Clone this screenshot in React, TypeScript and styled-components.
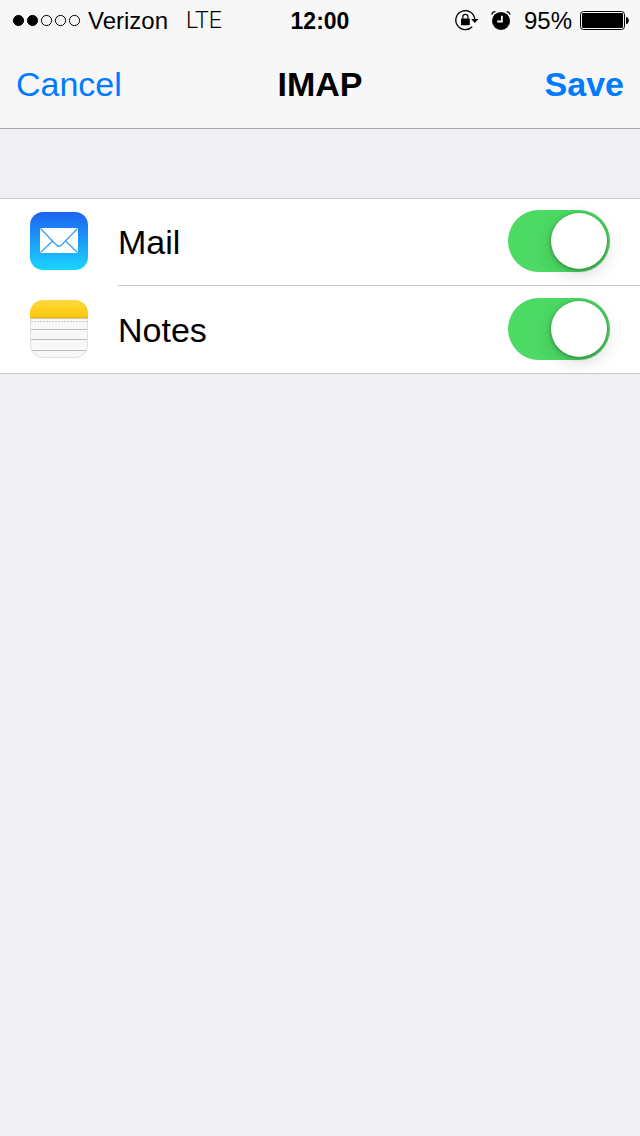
import React, { useState } from 'react';
import styled, { createGlobalStyle } from 'styled-components';

const GlobalStyle = createGlobalStyle`
  * { box-sizing: border-box; }
  body {
    margin: 0;
    background: #efeff4;
    color: #000;
    font-family: "Liberation Sans", Arial, sans-serif;
  }
`;

const Header = styled.header`
  background: #f7f7f7;
  border-bottom: 1px solid #a7a7ab;
`;

const StatusBar = styled.div`
  display: grid;
  grid-template-columns: 1fr auto 1fr;
  align-items: center;
  height: 42px;
  padding: 0 11px;
  font-size: 24px;
  line-height: 42px;
  svg { display: block; }
`;

const StatusGroup = styled.div<{ $end?: boolean }>`
  display: flex;
  align-items: center;
  justify-content: ${(p) => (p.$end ? 'flex-end' : 'flex-start')};
  gap: 8px;
`;

const Network = styled.span`
  margin-left: 10px;
  font-family: Roboto, "Liberation Sans", sans-serif;
  font-size: 23px;
  font-weight: 300;
`;

const Clock = styled.time`
  font-size: 23px;
  font-weight: 700;
`;

const AlarmSlot = styled.span`
  padding: 0 5px 0 4px;
`;

const NavBar = styled.nav`
  display: grid;
  grid-template-columns: 1fr auto 1fr;
  align-items: center;
  height: 86px;
  padding: 0 16px 2px;
`;

const Title = styled.h1`
  margin: 0;
  font-size: 34px;
  line-height: 40px;
`;

const NavButton = styled.button<{ $primary?: boolean }>`
  justify-self: ${(p) => (p.$primary ? 'end' : 'start')};
  padding: 0;
  border: 0;
  background: none;
  color: #007aff;
  font-family: inherit;
  font-size: 34px;
  font-weight: ${(p) => (p.$primary ? 700 : 400)};
  line-height: 40px;
  cursor: pointer;
`;

const List = styled.ul`
  margin: 69px 0 0;
  padding: 0;
  list-style: none;
  background: #fff;
  box-shadow: inset 0 1px #c8c7cc, inset 0 -1px #c8c7cc;
`;

const Row = styled.li`
  display: flex;
  padding-left: 30px;
`;

const IconBox = styled.span`
  flex: none;
  width: 88px;
  padding-top: 14px;
  svg { display: block; }
`;

const RowBody = styled.div`
  display: flex;
  flex: 1;
  align-items: center;
  height: 88px;
  padding: 12px 30px 13px 0;
  border-bottom: 1px solid #c8c7cc;
`;

const RowLabel = styled.label`
  flex: 1;
  padding-top: 2px;
  font-size: 34px;
  line-height: 40px;
`;

const Switch = styled.input`
  appearance: none;
  flex: none;
  width: 102px;
  height: 62px;
  margin: 0;
  padding: 3px;
  border-radius: 31px;
  background: #e5e5ea;
  cursor: pointer;
  transition: background 0.2s;

  &::before {
    content: '';
    display: block;
    width: 56px;
    height: 56px;
    border-radius: 50%;
    background: #fff;
    box-shadow: 0 1px 4px rgba(0, 0, 0, 0.36), 0 6px 18px rgba(0, 0, 0, 0.14);
    transition: margin 0.2s;
  }
  &:checked { background: #4cd964; }
  &:checked::before { margin-left: 40px; }
`;

const SignalDots = () => (
  <svg width="69" height="14" viewBox="-2 0 69 14" aria-hidden="true">
    {[0, 1, 2, 3, 4].map((i) => (
      <circle
        key={i}
        cx={5.5 + i * 14}
        cy="6.5"
        r="5.1"
        fill={i < 2 ? '#000' : 'none'}
        stroke="#000"
        strokeWidth="1"
      />
    ))}
  </svg>
);

const RotationLock = () => (
  <svg width="24" height="22" viewBox="0 0 24 22" aria-hidden="true">
    <path d="M19.8 9.5A9.5 9.5 0 1 0 17.2 16.7" fill="none" stroke="#000" strokeWidth="1.3" />
    <path d="M16.2 9h7.2l-3.6 4z" />
    <rect x="6" y="8.4" width="8.8" height="6.8" rx="0.6" />
    <path d="M7.8 8.8V6.9a2.6 2.6 0 0 1 5.2 0v1.9" fill="none" stroke="#000" strokeWidth="1.2" />
  </svg>
);

const Alarm = () => (
  <svg width="20" height="20" viewBox="0 0 20 20" aria-hidden="true">
    <circle cx="10" cy="9.9" r="9" />
    <path d="M10.9 4.8v5.7H6.2" fill="none" stroke="#f7f7f7" strokeWidth="1.8" />
    <path d="M0.9 3.8C1.1 2 2.4 0.7 4.4 0.7M19.1 3.8C18.9 2 17.6 0.7 15.6 0.7" fill="none" stroke="#000" strokeWidth="1.2" />
  </svg>
);

const Battery = () => (
  <svg width="49" height="20" viewBox="0 0 49 20" aria-hidden="true">
    <rect x="0.5" y="0.5" width="44" height="18" rx="3" fill="none" stroke="#000" />
    <rect x="2" y="2" width="41" height="15" rx="1.2" />
    <path d="M46 6c3.7 0 3.7 7 0 7z" />
  </svg>
);

const MailIcon = () => (
  <svg width="58" height="58" viewBox="0 0 58 58" aria-hidden="true">
    <defs>
      <linearGradient id="mail-sky" x1="0" y1="0" x2="0" y2="1">
        <stop offset="0" stopColor="#1d62f0" />
        <stop offset="1" stopColor="#19d5fd" />
      </linearGradient>
    </defs>
    <rect width="58" height="58" rx="13" fill="url(#mail-sky)" />
    <rect x="10" y="16" width="38" height="25" rx="0.8" fill="#fff" />
    <g fill="none" stroke="#2b9bf6" strokeWidth="1.1">
      <path d="M10.5 16.5L26.4 33Q29 35.6 31.6 33L47.5 16.5" />
      <path d="M10.5 40.5L22.5 29M47.5 40.5L35.5 29" />
    </g>
  </svg>
);

const NotesIcon = () => (
  <svg width="58" height="58" viewBox="0 0 58 58" aria-hidden="true">
    <defs>
      <linearGradient id="notes-gold" x1="0" y1="0" x2="0" y2="1">
        <stop offset="0" stopColor="#fed93f" />
        <stop offset="1" stopColor="#fdc905" />
      </linearGradient>
      <clipPath id="notes-shape">
        <rect width="58" height="58" rx="13" />
      </clipPath>
    </defs>
    <g clipPath="url(#notes-shape)">
      <rect width="58" height="58" fill="#f8f8f8" />
      <rect width="58" height="18" fill="url(#notes-gold)" />
      <path d="M0 18H58" stroke="#c0a24a" />
      <path d="M1 21.5H58" stroke="#c4c4c6" strokeDasharray="2 1" />
      <path d="M0 29.5H58M0 39.5H58M0 50.5H58" stroke="#bcbcbe" />
    </g>
    <path d="M0.5 19V45A12.5 12.5 0 0 0 13 57.5H45A12.5 12.5 0 0 0 57.5 45V19" fill="none" stroke="#e0e0e2" />
  </svg>
);

const services = [
  { id: 'mail', name: 'Mail', Icon: MailIcon },
  { id: 'notes', name: 'Notes', Icon: NotesIcon },
];

export default function App() {
  const [enabled, setEnabled] = useState<Record<string, boolean>>({ mail: true, notes: true });

  return (
    <>
      <GlobalStyle />
      <Header>
        <StatusBar>
          <StatusGroup>
            <SignalDots />
            <span>Verizon</span>
            <Network>LTE</Network>
          </StatusGroup>
          <Clock>12:00</Clock>
          <StatusGroup $end>
            <RotationLock />
            <AlarmSlot><Alarm /></AlarmSlot>
            <span>95%</span>
            <Battery />
          </StatusGroup>
        </StatusBar>
        <NavBar>
          <NavButton type="button">Cancel</NavButton>
          <Title>IMAP</Title>
          <NavButton type="button" $primary>Save</NavButton>
        </NavBar>
      </Header>
      <main>
        <List>
          {services.map(({ id, name, Icon }) => (
            <Row key={id}>
              <IconBox><Icon /></IconBox>
              <RowBody>
                <RowLabel htmlFor={id}>{name}</RowLabel>
                <Switch
                  id={id}
                  type="checkbox"
                  role="switch"
                  checked={enabled[id]}
                  onChange={(e) => setEnabled({ ...enabled, [id]: e.target.checked })}
                />
              </RowBody>
            </Row>
          ))}
        </List>
      </main>
    </>
  );
}
